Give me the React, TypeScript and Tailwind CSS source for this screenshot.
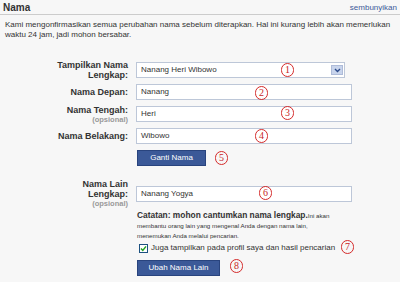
import React from "react";

function Mark({ n, className }: { n: number; className: string }) {
  return (
    <div
      className={`absolute w-[13px] h-[14px] rounded-full border border-[#d42a2a] text-[#c81e1e] flex items-center justify-center font-['Liberation_Serif',serif] text-[10px] leading-none ${className}`}
    >
      {n}
    </div>
  );
}

function Label({ children }: { children: React.ReactNode }) {
  return (
    <div className="w-[128px] shrink-0 text-right font-bold text-[9px] leading-[10px] text-[#333]">
      {children}
    </div>
  );
}

function Opsional() {
  return <div className="text-[7.5px] leading-[9px] text-[#999]">(opsional)</div>;
}

function TextInput({ value }: { value: string }) {
  return (
    <div className="ml-[8px] w-[216px] h-[16px] bg-white border border-[#bdc7d8] px-[4px] flex items-center text-[8px] text-[#333]">
      {value}
    </div>
  );
}

export default function App() {
  return (
    <div className="relative w-[400px] h-[282px] overflow-hidden bg-[#f7f7f7] font-['Liberation_Sans',Arial,sans-serif] text-[#333]">
      {/* header */}
      <div className="flex items-end justify-between border-b border-[#cccccc] h-[15px] px-[3px] pb-[1px]">
        <span className="font-bold text-[10px] leading-[10px]">Nama</span>
        <span className="text-[8px] leading-[10px] text-[#3b5998]">sembunyikan</span>
      </div>

      <p className="mt-[5px] px-[5px] text-[8px] leading-[10px]">
        Kami mengonfirmasikan semua perubahan nama sebelum diterapkan. Hal ini kurang lebih akan memerlukan
        <br />
        waktu 24 jam, jadi mohon bersabar.
      </p>

      {/* name rows */}
      <div className="mt-[19px] flex flex-col">
        <div className="flex items-center h-[22px]">
          <Label>
            Tampilkan Nama
            <br />
            Lengkap:
          </Label>
          <div className="ml-[8px] w-[209px] h-[16px] bg-white border border-[#bdc7d8] pl-[4px] pr-[1px] flex items-center justify-between text-[8px]">
            <span>Nanang Heri Wibowo</span>
            <div className="w-[12px] h-[10px] bg-[#c8d4ec] border border-[#aebbd8] flex items-center justify-center">
              <svg width="7" height="5" viewBox="0 0 7 5">
                <path d="M1 1 L3.5 3.5 L6 1" fill="none" stroke="#2b4a8a" strokeWidth="1.4" />
              </svg>
            </div>
          </div>
        </div>
        <div className="flex items-center h-[22px]">
          <Label>Nama Depan:</Label>
          <TextInput value="Nanang" />
        </div>
        <div className="flex items-center h-[22px]">
          <Label>
            Nama Tengah:
            <Opsional />
          </Label>
          <TextInput value="Heri" />
        </div>
        <div className="flex items-center h-[22px]">
          <Label>Nama Belakang:</Label>
          <TextInput value="Wibowo" />
        </div>
        <div className="flex mt-[3px]">
          <div className="w-[137px] shrink-0" />
          <button className="w-[69px] h-[16px] bg-[#3b5998] border border-[#29447e] text-white text-[8px] leading-none flex items-center justify-center">
            Ganti Nama
          </button>
        </div>
      </div>

      {/* alternate name */}
      <div className="mt-[13px] flex items-center">
        <Label>
          Nama Lain
          <br />
          Lengkap:
          <Opsional />
        </Label>
        <TextInput value="Nanang Yogya" />
      </div>

      <div className="flex mt-[2px]">
        <div className="w-[137px] shrink-0" />
        <div className="flex flex-col">
          <p className="text-[6.2px] leading-[10px]">
            <span className="font-bold text-[8.4px]">Catatan: mohon cantumkan nama lengkap.</span>Ini akan
            <br />
            membantu orang lain yang mengenal Anda dengan nama lain,
            <br />
            menemukan Anda melalui pencarian.
          </p>
          <div className="flex items-center mt-[1px] h-[12px]">
            <div className="ml-[2px] w-[9px] h-[9px] bg-white border border-[#1c5180] flex items-center justify-center">
              <svg width="7" height="7" viewBox="0 0 7 7">
                <path d="M1 3.5 L2.8 5.4 L6 1.4" fill="none" stroke="#21a121" strokeWidth="1.5" />
              </svg>
            </div>
            <span className="ml-[3px] text-[8px] leading-none">
              Juga tampilkan pada profil saya dan hasil pencarian
            </span>
          </div>
          <button className="mt-[6px] w-[83px] h-[16px] bg-[#3b5998] border border-[#29447e] text-white text-[8px] leading-none flex items-center justify-center">
            Ubah Nama Lain
          </button>
        </div>
      </div>

      {/* annotations */}
      <Mark n={1} className="left-[281px] top-[63px]" />
      <Mark n={2} className="left-[255px] top-[86px]" />
      <Mark n={3} className="left-[281px] top-[106px]" />
      <Mark n={4} className="left-[255px] top-[129px]" />
      <Mark n={5} className="left-[215px] top-[151px]" />
      <Mark n={6} className="left-[259px] top-[186px]" />
      <Mark n={7} className="left-[341px] top-[240px]" />
      <Mark n={8} className="left-[230px] top-[259px]" />
    </div>
  );
}
